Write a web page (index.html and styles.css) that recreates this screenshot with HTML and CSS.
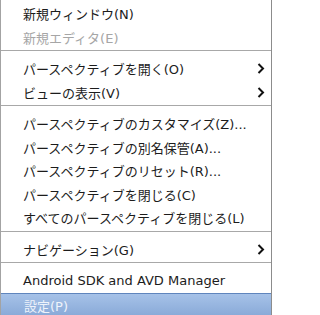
FILE: index.html
```html
<!DOCTYPE html>
<html>
<head>
<meta charset="utf-8">
<link rel="stylesheet" href="styles.css">
</head>
<body>
<div class="menu">
  <div class="item">新規ウィンドウ(N)</div>
  <div class="item disabled">新規エディタ(E)</div>
  <div class="sep"></div>
  <div class="item sub">パースペクティブを開く(O)<svg class="arrow" viewBox="0 0 8 11"><polyline points="1.5,1 6,5.5 1.5,10"/></svg></div>
  <div class="item sub">ビューの表示(V)<svg class="arrow" viewBox="0 0 8 11"><polyline points="1.5,1 6,5.5 1.5,10"/></svg></div>
  <div class="sep"></div>
  <div class="item">パースペクティブのカスタマイズ(Z)...</div>
  <div class="item">パースペクティブの別名保管(A)...</div>
  <div class="item">パースペクティブのリセット(R)...</div>
  <div class="item">パースペクティブを閉じる(C)</div>
  <div class="item">すべてのパースペクティブを閉じる(L)</div>
  <div class="sep"></div>
  <div class="item sub">ナビゲーション(G)<svg class="arrow" viewBox="0 0 8 11"><polyline points="1.5,1 6,5.5 1.5,10"/></svg></div>
  <div class="sep"></div>
  <div class="item">Android SDK and AVD Manager</div>
  <div class="item selected">設定(P)</div>
</div>
</body>
</html>
```
FILE: styles.css
```css
html, body {
  margin: 0;
  padding: 0;
  background: #ffffff;
}
.menu {
  width: 272px;
  height: 315px;
  box-sizing: border-box;
  border-left: 1px solid #a3a3a3;
  border-right: 1px solid #8c8c8c;
  padding-top: 2px;
  font-family: "DejaVu Sans", "Noto Sans CJK JP", sans-serif;
  font-size: 13px;
  color: #1c1c1c;
  display: flex;
  flex-direction: column;
  overflow: hidden;
}
.item {
  height: 23.5px;
  flex: none;
  display: flex;
  align-items: center;
  padding-left: 22px;
  padding-right: 6px;
  white-space: nowrap;
}
.disabled {
  color: #a6a6a6;
}
.sub {
  justify-content: space-between;
}
.arrow {
  width: 8px;
  height: 11px;
  fill: none;
  stroke: #111111;
  stroke-width: 2;
}
.sep {
  height: 8px;
  flex: none;
  box-sizing: border-box;
  border-top: 1px solid #a8a8a8;
  margin-top: 1px;
  margin-bottom: -1px;
}
.selected {
  margin-left: -1px;
  margin-right: -1px;
  padding-left: 23px;
  height: 26px;
  box-sizing: border-box;
  border: 1px solid #5f85bd;
  background: linear-gradient(#a6c2e8, #86a7d6);
  color: #eef3fb;
}
```
